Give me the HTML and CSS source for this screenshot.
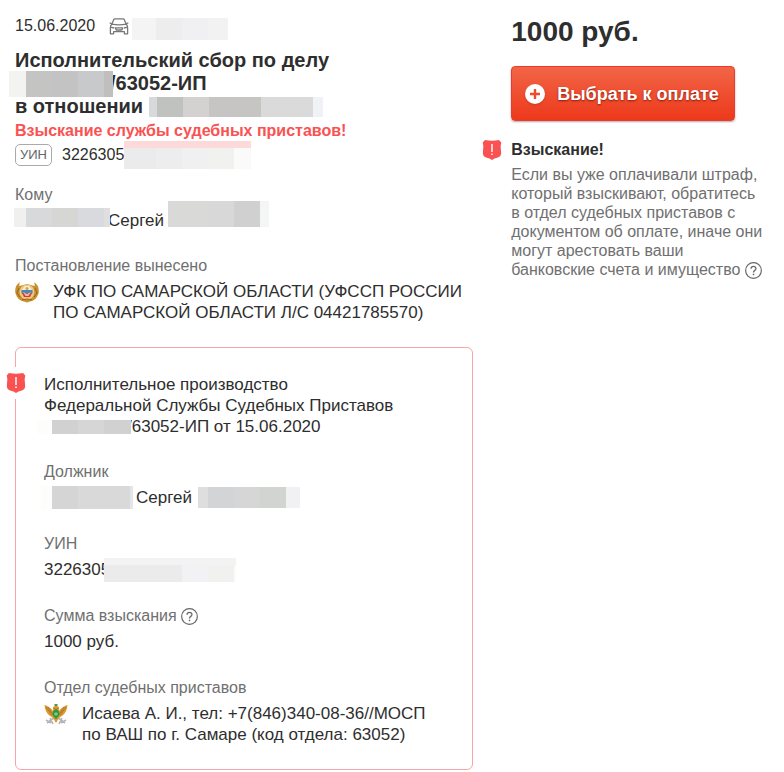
FILE: index.html
```html
<!DOCTYPE html>
<html lang="ru">
<head>
<meta charset="utf-8">
<meta name="viewport" content="width=device-width, initial-scale=1">
<title>Исполнительский сбор</title>
<link rel="stylesheet" href="styles.css">
</head>
<body>
<svg class="sprite" aria-hidden="true">
  <symbol id="alert" viewBox="0 0 20 22">
    <path fill="#fa5252" d="M3 1Q10 2.600 17 1L19.300 3.500Q18 7 19 12 20 17 16 18.500 12 19 10 21 8 19 4 18.500 0 17 1 12 2 7 .7 3.500Z"/>
    <path fill="#fff" d="M9.300 5h1.400v8h-1.400zM9.300 14.500h1.400v1.500h-1.400z"/>
  </symbol>
  <symbol id="help" viewBox="0 0 16 16">
    <circle cx="8" cy="8" r="7.400" fill="none" stroke="#666" stroke-width="1.100"/>
    <path d="M5.700 6.400C5.700 3.400 10.400 3.500 10.300 6.300 10.200 8 8 7.800 8 9.800" fill="none" stroke="#666" stroke-width="1.200"/>
    <path d="M7.300 11h1.400v1.400H7.300z" fill="#666"/>
  </symbol>
</svg>
<main class="page">
  <section class="details">
    <div class="line meta">
      <time datetime="2020-06-15">15.06.2020</time>
      <svg class="car" viewBox="0 0 20 17" fill="none" stroke="#777" stroke-width="1.300" stroke-linejoin="round" aria-hidden="true">
        <path d="M2.800 6.200 4.800 1.600Q5 .8 6 .8h8q1 0 1.200.8l2 4.600M2.800 6.200Q10 7.400 17.200 6.200M2.800 6 .7 4.800M17.200 6l2.100-1.200M2.800 6.200Q1.200 7.500 1.400 10v5.800h3.200v-2.200h10.800v2.200h3.200V10q.2-2.500-1.400-3.800M1.600 9.200l3.400.8M18.400 9.200 15 10M6.200 9.800h7.600l-1 2.200H7.200z"/>
      </svg>
      <span class="mask mask-plate"></span>
    </div>
    <h1 class="title">
      <span class="line">Исполнительский сбор по делу</span>
      <span class="line"><span class="mask mask-case"></span>/63052-ИП</span>
      <span class="line">в отношении <span class="mask mask-person"></span></span>
    </h1>
    <p class="warning">Взыскание службы судебных приставов!</p>
    <div class="line uin"><span class="tag">УИН</span>3226305<span class="mask mask-uin"></span></div>
    <dl class="fields">
      <div class="field">
        <dt>Кому</dt>
        <dd class="line"><span class="mask mask-surname"></span>Сергей<span class="mask mask-patronymic"></span></dd>
      </div>
      <div class="field">
        <dt>Постановление вынесено</dt>
        <dd class="office">
          <svg class="emblem" viewBox="0 0 24 22" aria-hidden="true">
            <path d="M5 1Q-1 5 .5 12.500 3 20 9 20.500l3 1 3-1q6-.5 8.500-8Q25 5 19 1q1 2 .5 4L12 3 4.500 5Q4 3 5 1Z" fill="#c8902f"/>
            <circle cx="12" cy="11" r="7.500" fill="#efc980"/>
            <path d="M4 7 2 12l3 4M20 7l2 5-3 4M7 19l5-1 5 1" fill="none" stroke="#99641d"/>
            <path d="M6.500 9.500 10 5h4l3.500 4.500Z" fill="#f7edda"/>
            <path d="M6.500 9h11v3.500h-11z" fill="#4688bb"/>
            <path d="M7 12h10l-2 4H9Z" fill="#d83a2c"/>
            <path d="m8 11 4 2 4-2-2.500 4h-3Z" fill="#fff" opacity=".6"/>
            <circle cx="12" cy="7.500" r="1.500" fill="#d6a047"/>
          </svg>
          <span>УФК ПО САМАРСКОЙ ОБЛАСТИ (УФССП РОССИИ ПО САМАРСКОЙ ОБЛАСТИ Л/С 04421785570)</span>
        </dd>
      </div>
    </dl>
    <article class="card">
      <svg class="shield card-shield" aria-hidden="true"><use href="#alert"/></svg>
      <h2 class="case">
        <span class="line">Исполнительное производство</span>
        <span class="line">Федеральной Службы Судебных Приставов</span>
        <span class="line"><span class="mask mask-number"></span>/63052-ИП от 15.06.2020</span>
      </h2>
      <dl class="fields">
        <div class="field">
          <dt>Должник</dt>
          <dd class="line"><span class="mask mask-debtor"></span>Сергей<span class="mask mask-debtor-end"></span></dd>
        </div>
        <div class="field">
          <dt>УИН</dt>
          <dd class="line">3226305<span class="mask mask-card-uin"></span></dd>
        </div>
        <div class="field">
          <dt>Сумма взыскания <button class="help" type="button" aria-label="Справка"><svg aria-hidden="true"><use href="#help"/></svg></button></dt>
          <dd>1000 руб.</dd>
        </div>
        <div class="field">
          <dt>Отдел судебных приставов</dt>
          <dd class="office">
            <svg class="emblem" viewBox="0 0 24 22" aria-hidden="true">
              <path d="m3 20 8-6 2 0 8 6M2 17l5 3M22 17l-5 3M6 15l3 6M18 15l-3 6" fill="none" stroke="#b5b5b9" stroke-width="1.600"/>
              <path d="M.5 2Q5 3 9 8V4l2-1 1-2 1 2 2 1v4q4-5 8.500-6-.5 7-5 10.500L15 15l-3 5-3-5-3.500-2.500Q1 9 .5 2Z" fill="#dc982f"/>
              <path d="m2 4 6 8M4 4l4 6M22 4l-6 8M20 4l-4 6M10 5l2 2 2-2" fill="none" stroke="#a96821" stroke-width=".8"/>
              <path d="M12 6q4 2 3.500 6L12 16l-3.500-4Q8 8 12 6Z" fill="#279946"/>
              <circle cx="12" cy="11" r="1.800" fill="#79cf79"/>
              <path d="M10.500 1h3v2h-3z" fill="#4d984c"/>
            </svg>
            <span>Исаева А. И., тел: +7(846)340-08-36//МОСП по ВАШ по г. Самаре (код отдела: 63052)</span>
          </dd>
        </div>
      </dl>
    </article>
  </section>
  <aside class="payment">
    <p class="price">1000 руб.</p>
    <button class="pay" type="button">
      <svg class="plus" viewBox="0 0 20 20" aria-hidden="true"><circle cx="10" cy="10" r="10" fill="#fff"/><path d="M10 5v10M5 10h10" stroke="#ef4b2c" stroke-width="2.400"/></svg>
      Выбрать к оплате
    </button>
    <div class="notice">
      <svg class="shield notice-shield" aria-hidden="true"><use href="#alert"/></svg>
      <h2>Взыскание!</h2>
      <p>Если вы уже оплачивали штраф, который взыскивают, обратитесь в&nbsp;отдел судебных приставов с документом об оплате, иначе они могут арестовать ваши банковские счета и имущество&nbsp;<button class="help" type="button" aria-label="Справка"><svg aria-hidden="true"><use href="#help"/></svg></button></p>
    </div>
  </aside>
</main>
</body>
</html>
```
FILE: styles.css
```css
* {
  box-sizing: border-box;
}

body {
  margin: 0;
  background: #fff;
  color: #2e2e2e;
  font: 16px/20px "Liberation Sans", Arial, sans-serif;
}

h1,
h2,
p,
dl,
dd {
  margin: 0;
}

button {
  font: inherit;
  cursor: pointer;
}

.sprite {
  position: absolute;
  width: 0;
  height: 0;
}

.page {
  display: grid;
  grid-template-columns: minmax(0, 16fr) minmax(0, 9fr);
  gap: 38px;
  padding: 16px 15px 0;
}

.line {
  display: flex;
  align-items: center;
  white-space: pre;
}

.meta {
  height: 20px;
  white-space: nowrap;
}

.car {
  width: 20px;
  height: 17px;
  margin-left: 14px;
}

.title {
  margin-top: 13px;
  font-size: 20px;
  line-height: 23px;
}

.title .line {
  height: 23px;
}

.warning {
  margin-top: 3px;
  color: #fa5252;
  font-weight: bold;
}

.uin {
  height: 22px;
  margin-top: 3px;
}

.tag {
  width: 37px;
  height: 22px;
  margin-right: 10px;
  border: 1px solid #aaa;
  border-radius: 5px;
  color: #666;
  font-size: 13px;
  text-align: center;
}

/* Redacted values */
.mask {
  flex: none;
  position: relative;
  margin-block: -8px;
}

.mask-plate {
  top: 3px;
  width: 96px;
  height: 22px;
  margin-left: 3px;
  background: linear-gradient(90deg, #f4f4f4 24px, #ededed 24px 50px, #f0f0f2 50px 76px, #f2f2f2 76px);
}

.mask-case {
  width: 104px;
  height: 26px;
  margin-left: -6px;
  margin-right: -3px;
  background: linear-gradient(90deg, #f3f3f1 17px, #c4c4c2 17px 43px, #c3c3c3 43px 69px, #c7c9cb 69px 95px, #c0bfbd 95px);
}

.mask-person {
  width: 174px;
  height: 20px;
  background: linear-gradient(90deg, #d7d9db 8px, #c0c2c0 8px 34px, #d3d2d0 34px 60px, #c7c5c4 60px 112px, #dadada 112px 164px, #f1f2f5 164px);
}

.mask-uin {
  width: 127px;
  height: 28px;
  border-top: 7px solid #fdd9d9;
  background: linear-gradient(90deg, #ebebeb 32px, #ededed 32px 58px, #f0f0f0 58px 84px, #f1f1ef 84px 110px, #fafafa 110px);
}

.mask-surname {
  top: -3px;
  width: 96px;
  height: 19px;
  margin-left: -1px;
  margin-right: -2px;
  background: linear-gradient(90deg, #f0f0ef 12px, #d8d9da 12px 38px, #d6d6d4 38px 64px, #d9dadd 64px 90px, #dfdfe0 90px);
}

.mask-patronymic {
  top: -7px;
  width: 101px;
  height: 26px;
  margin-left: 4px;
  background: linear-gradient(90deg, #d9d9d8 40px, #d8d8d8 40px 66px, #d0d0d1 66px 92px, #f3f6f5 92px);
}

.mask-number {
  width: 94px;
  height: 14px;
  margin-left: -7px;
  margin-right: -4px;
  background: linear-gradient(90deg, #fdfdfc 15px, #d1d1d1 15px 41px, #d6d6d6 41px 67px, #d1d1d1 67px);
}

.mask-debtor {
  width: 92px;
  height: 23px;
  margin-left: -3px;
  margin-right: 3px;
  background: linear-gradient(90deg, #fdfdfc 11px, #d5d5d5 11px 37px, #d9d9d9 37px 89px, #e4e6e5 89px);
}

.mask-debtor-end {
  width: 102px;
  height: 21px;
  margin-left: 6px;
  background: linear-gradient(90deg, #dedede 10px, #d3d4d6 10px 36px, #d6d6d6 36px 62px, #d2d4d2 62px 88px, #f1f1f4 88px);
}

.mask-card-uin {
  width: 132px;
  height: 24px;
  margin-left: -6px;
  border-top: 7px solid #f3f3f3;
  background: linear-gradient(90deg, #ebebeb 78px, #f2f2f4 78px 104px, #f1f1ef 104px 130px, #fbfbfb 130px);
}

.fields {
  font-size: 17px;
  line-height: 21px;
}

.field + .field {
  margin-top: 25px;
}

dt {
  margin-bottom: 5px;
  color: #707070;
  font-size: 16px;
  line-height: 20px;
}

.details > .fields {
  margin-top: 19px;
}

.office {
  display: flex;
  gap: 14px;
}

.emblem {
  flex: none;
  width: 24px;
  height: 22px;
}

.card {
  position: relative;
  margin-top: 24px;
  padding: 26px 28px 24px;
  border: 1px solid #f7a5a5;
  border-radius: 6px;
}

.case {
  font-size: 17px;
  font-weight: normal;
  line-height: 21px;
}

.card .fields {
  margin-top: 25px;
}

.card .field + .field {
  margin-top: 26px;
}

.shield {
  position: absolute;
  width: 20px;
  height: 22px;
}

.card-shield {
  top: 19px;
  left: -10px;
  height: 32px;
  padding: 5px 0;
  background: #fff;
}

.help {
  width: 17px;
  height: 17px;
  padding: 0;
  border: 0;
  background: none;
  vertical-align: -4px;
}

.help svg {
  display: block;
  width: 17px;
  height: 17px;
}

.price {
  font-size: 28px;
  font-weight: bold;
  line-height: 32px;
}

.pay {
  display: flex;
  align-items: center;
  gap: 12px;
  height: 55px;
  margin-top: 18px;
  padding: 0 15px 0 13px;
  border: 1px solid #ed3a2c;
  border-radius: 4px;
  background: linear-gradient(#f16546, #ed391b);
  box-shadow: 0 1px 2px #0005;
  color: #fff;
  font-size: 18px;
  font-weight: bold;
  text-shadow: 0 1px 2px #8a1a0c;
  white-space: nowrap;
}

.plus {
  width: 20px;
  height: 20px;
  filter: drop-shadow(0 1px 1px #a0281466);
}

.notice {
  position: relative;
  margin-top: 19px;
  color: #707070;
  line-height: 19px;
}

.notice h2 {
  margin-bottom: 5px;
  color: #2e2e2e;
  font-size: 16px;
  line-height: 20px;
}

.notice-shield {
  top: -1px;
  left: -29px;
}
```
